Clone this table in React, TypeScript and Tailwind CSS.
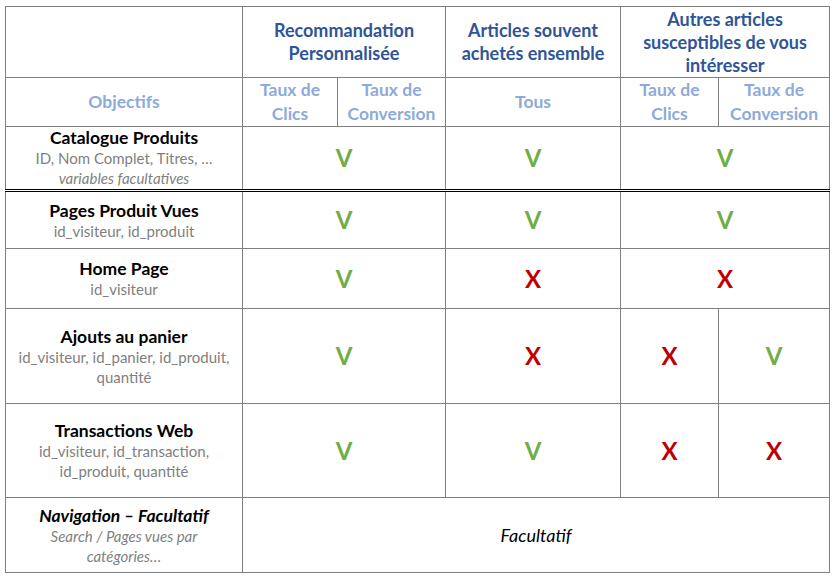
import React from "react";

const cell = "border border-[#808080] text-center align-middle p-0";
const head = "text-[#2f5597] font-bold text-[18px] leading-[23px]";
const sub = "text-[#8eaadb] font-bold text-[17.5px] leading-[24px]";
const dbl = "border-b-[3px] border-double border-b-black";

function Yes() {
    return <span className="text-[#70ad47] font-bold text-[24px]">V</span>;
}

function No() {
    return <span className="text-[#c00000] font-bold text-[24px]">X</span>;
}

function Obj({ title, detail, italic }: { title: string; detail: React.ReactNode; italic?: boolean }) {
    return (
        <div className="flex flex-col items-center px-2">
            <span className={italic ? "font-bold italic text-[17.5px] leading-[21px] text-black" : "font-bold text-[17.5px] leading-[21px] text-black"}>{title}</span>
            <span className={italic ? "italic text-[15px] leading-[20px] text-[#7f7f7f]" : "text-[15px] leading-[20px] text-[#7f7f7f]"}>{detail}</span>
        </div>
    );
}

export default function App() {
    return (
        <div className="w-[837px] h-[584px] bg-white pl-[5px] pt-[6px]" style={{ fontFamily: "Lato, 'Open Sans', sans-serif" }}>
            <table className="border-collapse table-fixed w-[825px]">
                <colgroup>
                    <col className="w-[237px]" />
                    <col className="w-[95px]" />
                    <col className="w-[108px]" />
                    <col className="w-[175px]" />
                    <col className="w-[98px]" />
                    <col className="w-[111px]" />
                </colgroup>
                <tbody>
                    <tr className="h-[71px]">
                        <td className={cell}></td>
                        <td className={cell} colSpan={2}><div className={head}>Recommandation<br />Personnalisée</div></td>
                        <td className={cell}><div className={head}>Articles souvent<br />achetés ensemble</div></td>
                        <td className={cell} colSpan={2}><div className={head}>Autres articles<br />susceptibles de vous<br />intéresser</div></td>
                    </tr>
                    <tr className="h-[48px]">
                        <td className={cell}><span className={sub}>Objectifs</span></td>
                        <td className={cell}><div className={sub}>Taux de<br />Clics</div></td>
                        <td className={cell}><div className={sub}>Taux de<br />Conversion</div></td>
                        <td className={cell}><span className={sub}>Tous</span></td>
                        <td className={cell}><div className={sub}>Taux de<br />Clics</div></td>
                        <td className={cell}><div className={sub}>Taux de<br />Conversion</div></td>
                    </tr>
                    <tr className="h-[64px]">
                        <td className={`${cell} ${dbl}`}>
                            <div className="flex flex-col items-center">
                                <span className="font-bold text-[17.5px] leading-[20px] text-black">Catalogue Produits</span>
                                <span className="text-[15px] leading-[20px] text-[#7f7f7f]">ID, Nom Complet, Titres, …</span>
                                <span className="italic text-[15px] leading-[20px] text-[#7f7f7f]">variables facultatives</span>
                            </div>
                        </td>
                        <td className={`${cell} ${dbl}`} colSpan={2}><Yes /></td>
                        <td className={`${cell} ${dbl}`}><Yes /></td>
                        <td className={`${cell} ${dbl}`} colSpan={2}><Yes /></td>
                    </tr>
                    <tr className="h-[58px]">
                        <td className={cell}><Obj title="Pages Produit Vues" detail="id_visiteur, id_produit" /></td>
                        <td className={cell} colSpan={2}><Yes /></td>
                        <td className={cell}><Yes /></td>
                        <td className={cell} colSpan={2}><Yes /></td>
                    </tr>
                    <tr className="h-[60px]">
                        <td className={cell}><Obj title="Home Page" detail="id_visiteur" /></td>
                        <td className={cell} colSpan={2}><Yes /></td>
                        <td className={cell}><No /></td>
                        <td className={cell} colSpan={2}><No /></td>
                    </tr>
                    <tr className="h-[95px]">
                        <td className={cell}><Obj title="Ajouts au panier" detail={<>id_visiteur, id_panier, id_produit,<br />quantité</>} /></td>
                        <td className={cell} colSpan={2}><Yes /></td>
                        <td className={cell}><No /></td>
                        <td className={cell}><No /></td>
                        <td className={cell}><Yes /></td>
                    </tr>
                    <tr className="h-[94px]">
                        <td className={cell}><Obj title="Transactions Web" detail={<>id_visiteur, id_transaction,<br />id_produit, quantité</>} /></td>
                        <td className={cell} colSpan={2}><Yes /></td>
                        <td className={cell}><Yes /></td>
                        <td className={cell}><No /></td>
                        <td className={cell}><No /></td>
                    </tr>
                    <tr className="h-[75px]">
                        <td className={cell}><Obj italic title="Navigation – Facultatif" detail={<>Search / Pages vues par<br />catégories…</>} /></td>
                        <td className={cell} colSpan={5}><span className="italic text-[18px] text-black">Facultatif</span></td>
                    </tr>
                </tbody>
            </table>
        </div>
    );
}
